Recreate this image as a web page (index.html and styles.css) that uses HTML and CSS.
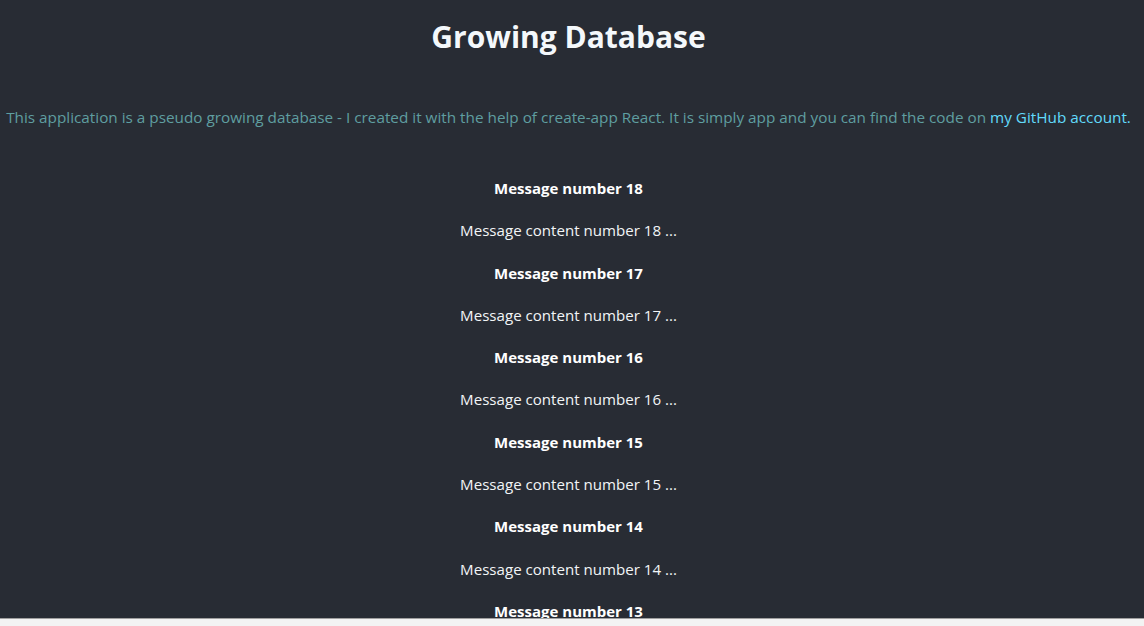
FILE: index.html
```html
<!DOCTYPE html>
<html lang="en">
<head>
<meta charset="utf-8">
<title>Growing Database</title>
<link rel="stylesheet" href="styles.css">
</head>
<body>
<div class="app">
  <h1 class="title">Growing Database</h1>
  <p class="intro">This application is a pseudo growing database - I created it with the help of create-app React. It is simply app and you can find the code on <a class="link" href="#">my GitHub account.</a></p>
  <div class="messages">
    <h4 class="msg-title">Message number 18</h4>
    <p class="msg-text">Message content number 18 ...</p>
    <h4 class="msg-title">Message number 17</h4>
    <p class="msg-text">Message content number 17 ...</p>
    <h4 class="msg-title">Message number 16</h4>
    <p class="msg-text">Message content number 16 ...</p>
    <h4 class="msg-title">Message number 15</h4>
    <p class="msg-text">Message content number 15 ...</p>
    <h4 class="msg-title">Message number 14</h4>
    <p class="msg-text">Message content number 14 ...</p>
    <h4 class="msg-title">Message number 13</h4>
    <p class="msg-text">Message content number 13 ...</p>
  </div>
</div>
<div class="scrollbar"></div>
</body>
</html>
```
FILE: styles.css
```css
html, body {
  margin: 0;
  padding: 0;
  height: 100%;
}
body {
  display: flex;
  flex-direction: column;
  background: #f3f3f3;
  font-family: "Open Sans", "Noto Sans", sans-serif;
}
.app {
  flex: 1;
  min-height: 0;
  overflow: hidden;
  padding-right: 7px;
  background: #282c34;
  color: #ffffff;
  text-align: center;
  display: flex;
  flex-direction: column;
}
.title {
  margin: 16px 0 0;
  font-size: 30px;
  line-height: 42px;
  font-weight: 700;
  color: #f4f8fb;
}
.intro {
  margin: 49px 0 0;
  font-size: 15.3px;
  line-height: 21px;
  color: #5f9ea0;
  white-space: nowrap;
}
.link {
  color: #61dafb;
  text-decoration: none;
}
.messages {
  margin-top: 50px;
  display: flex;
  flex-direction: column;
  gap: 21.3px;
}
.msg-title {
  margin: 0;
  font-size: 15px;
  line-height: 21px;
  font-weight: 700;
}
.msg-text {
  margin: 0;
  font-size: 15.1px;
  line-height: 21px;
  color: #f2f5f7;
}
.scrollbar {
  flex: 0 0 7px;
  border-top: 1px solid #a0a0a0;
  background: #f3f3f3;
}
```
